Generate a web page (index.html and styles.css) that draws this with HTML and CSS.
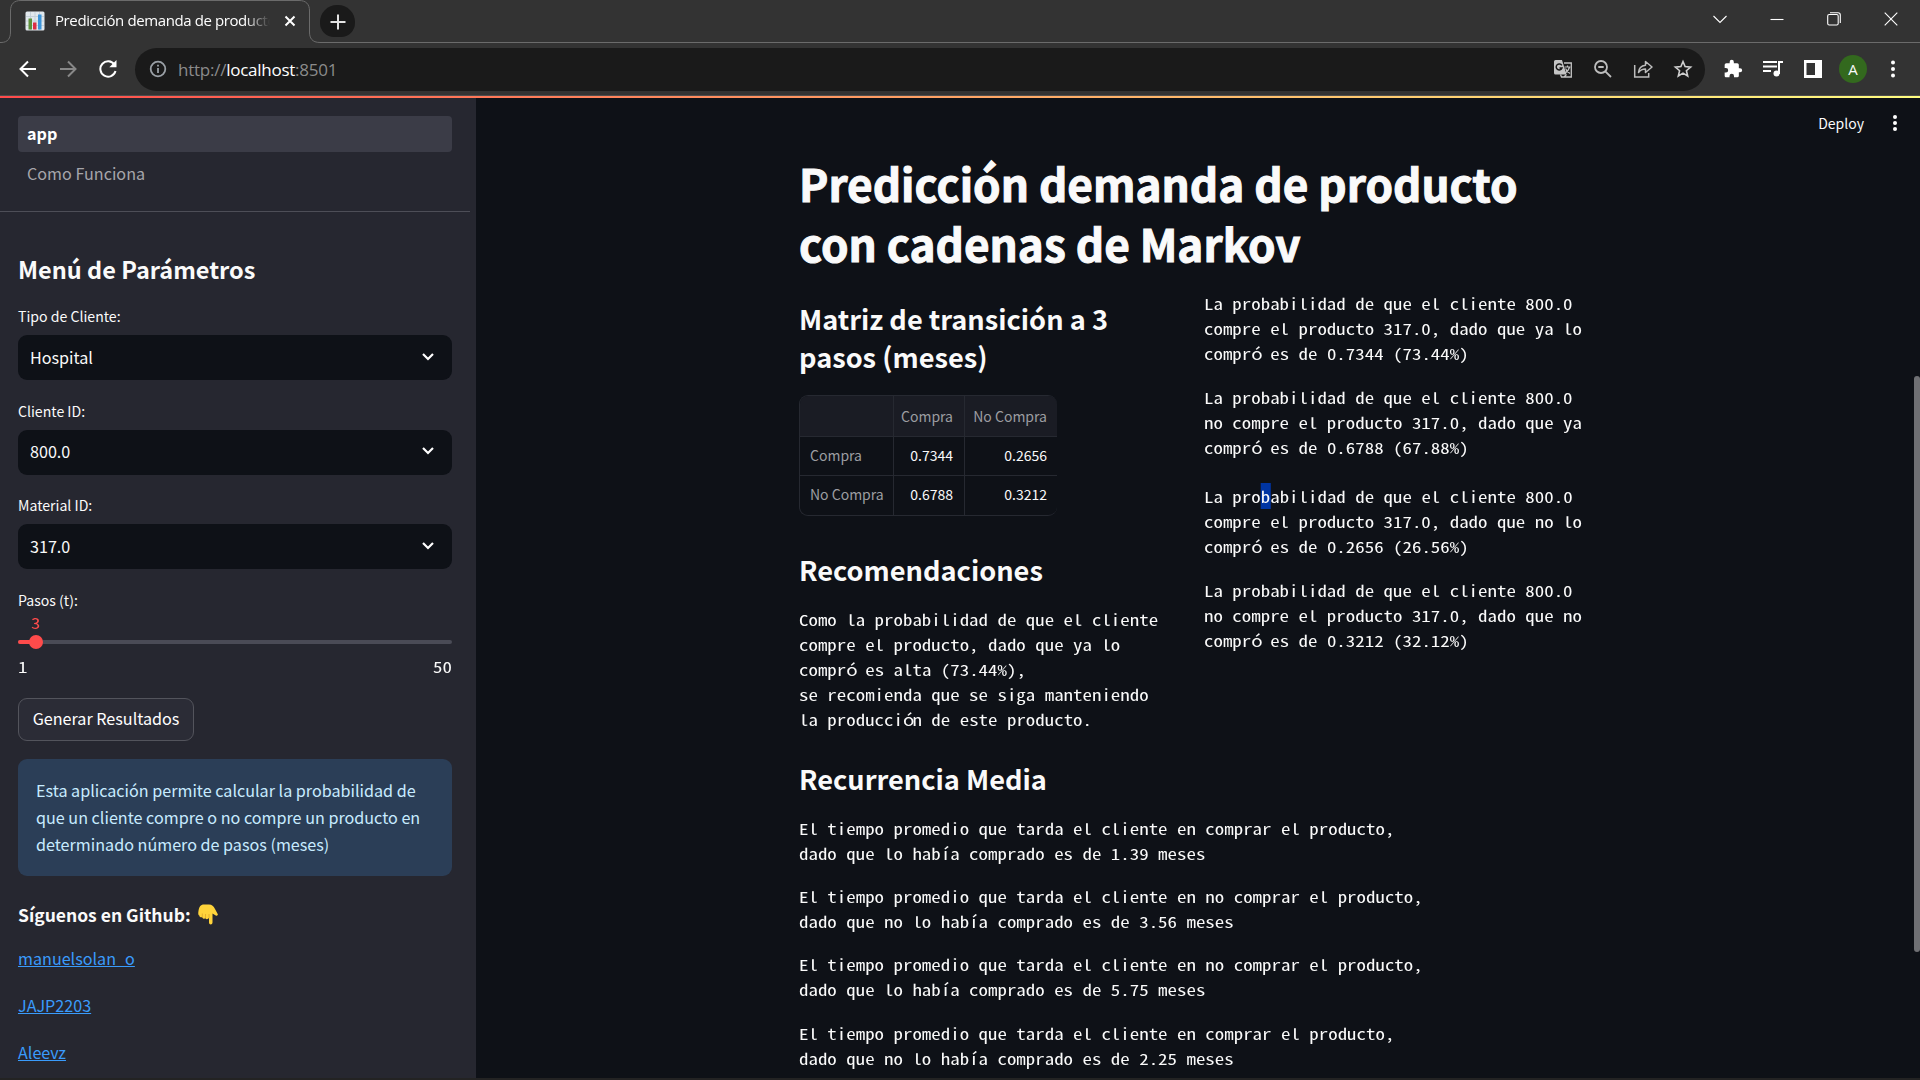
FILE: index.html
```html
<!DOCTYPE html>
<html lang="es">
<head>
<meta charset="utf-8">
<title>Predicción demanda de producto</title>
<link rel="stylesheet" href="styles.css">
</head>
<body>
<div class="window">
  <header class="tabstrip">
    <svg class="tab-outline" width="1920" height="43" viewBox="0 0 1920 43" fill="none" stroke="#6b6b6b"><path d="M0 42.5H1C8 42.5 10.500 38 10.500 32V11C10.500 4 14 .5 21 .5H299C306 .5 309.500 4 309.500 11V32C309.500 38 312 42.500 320 42.500H1920"/></svg>
    <svg class="favicon" width="20" height="20" viewBox="0 0 20 20"><rect x=".5" y=".5" width="19" height="19" rx="1.500" fill="#e1e8ed"/><path d="M5.500 1v18M10 1v18M14.500 1v18M1 5.500h18M1 10h18M1 14.500h18" stroke="#c5d1da"/><path fill="#5c913b" d="M3.500 7.500h3.500v11h-3.500z"/><path fill="#dd2e44" d="M8 11.500h3.500v7h-3.500z"/><path fill="#3b94d9" d="M13 3.500h3.500v15h-3.500z"/></svg>
    <span class="tab-title">Predicción demanda de producto</span>
    <svg class="tab-close" width="12" height="12" viewBox="0 0 12 12" stroke="#fff" stroke-width="2"><path d="M1.500 1.500l9 9M10.500 1.500l-9 9"/></svg>
    <span class="new-tab"><svg width="16" height="16" viewBox="0 0 16 16" stroke="#e4e4e4" stroke-width="2"><path d="M8 .5v15M.5 8h15"/></svg></span>
    <div class="win-buttons">
      <svg width="14" height="14" viewBox="0 0 14 14"><path d="M.5 4l6.500 6.500L13.500 4"/></svg>
      <svg width="14" height="14" viewBox="0 0 14 14"><path d="M.5 7.500h13"/></svg>
      <svg width="14" height="14" viewBox="0 0 14 14"><rect x=".7" y="2.500" width="10.500" height="10.500" rx="1.500"/><path d="M3 .7h8a2.300 2.300 0 0 1 2.300 2.300v8"/></svg>
      <svg width="14" height="14" viewBox="0 0 14 14"><path d="M.7.7l12.600 12.600M13.300.7L.7 13.300"/></svg>
    </div>
  </header>
  <div class="toolbar">
    <svg class="nav" width="18" height="18" viewBox="0 0 18 18" stroke="#fff"><path d="M17 9H2M9 1.500L1.500 9 9 16.500"/></svg>
    <svg class="nav" width="18" height="18" viewBox="0 0 18 18" stroke="#888"><path d="M1 9h15M9 1.500L16.500 9 9 16.500"/></svg>
    <svg class="nav" width="18" height="18" viewBox="0 0 18 18" stroke="#fff"><path d="M15.500 4.700A7.700 7.700 0 1 0 16.500 11"/><path d="M17.500 0v7.200h-7.200z" fill="#fff" stroke="none"/></svg>
    <div class="omnibox">
      <svg width="18" height="18" viewBox="0 0 18 18" fill="none" stroke="#9aa0a6" stroke-width="1.800"><circle cx="9" cy="9" r="7.300"/><path d="M9 8v5M9 4.800v1.800"/></svg>
      <span class="url">http://<b>localhost</b>:8501</span>
      <div class="omni-icons">
        <svg width="20" height="20" viewBox="0 0 20 20"><path d="M2.500 1h6.500l4.500 14.500H2.500A1.500 1.500 0 0 1 1 14V2.500A1.500 1.500 0 0 1 2.500 1z" fill="#c4c4c4"/><path d="M11 4h7.300v14H8.500l-1-2.500M13.500 15.500L11 18" fill="none" stroke="#c4c4c4" stroke-width="1.300"/><path d="M8.800 6.400A3 3 0 1 0 9 9H6.500" fill="none" stroke="#1a1a1a" stroke-width="1.500"/><path d="M11.500 8h6M14.500 6.500V8M16.500 8c-.7 3-2.500 5-4.500 6M12.500 9.500c1 2 2.500 4 4.500 5" fill="none" stroke="#c4c4c4" stroke-width="1.200"/></svg>
        <svg width="20" height="20" viewBox="0 0 20 20" fill="none" stroke="#bdbdbd" stroke-width="1.800"><circle cx="8" cy="8" r="6"/><path d="M12.300 12.300l5.700 5.700M5.300 8h5.400"/></svg>
        <svg width="20" height="20" viewBox="0 0 20 20" fill="none" stroke="#bdbdbd" stroke-width="1.500"><path d="M1.700 6v12h14V14"/><path d="M5.500 13.500c.3-4.500 3-6.800 7-7.300V2.500L19 8l-6.500 5.500V10c-3 0-5.200 1-7 3.500z" stroke-linejoin="round"/></svg>
        <svg width="20" height="20" viewBox="0 0 20 20" fill="none" stroke="#cfcfcf" stroke-width="1.600"><path d="M10 2.500l2.100 5.100 5.500.5-4.200 3.600 1.300 5.300L10 14.100 5.300 17l1.300-5.300-4.200-3.600 5.500-.5z"/></svg>
      </div>
    </div>
    <div class="ext-icons">
      <svg width="20" height="20" viewBox="0 0 24 24" fill="#fff"><path d="M20.500 11H19V7a2 2 0 0 0-2-2h-4V3.500a2.500 2.500 0 0 0-5 0V5H4a2 2 0 0 0-2 2v3.800h1.500a2.700 2.700 0 0 1 0 5.400H2V20c0 1.100.9 2 2 2h3.800v-1.500a2.700 2.700 0 0 1 5.400 0V22H17a2 2 0 0 0 2-2v-4h1.500a2.500 2.500 0 0 0 0-5z"/></svg>
      <svg width="20" height="20" viewBox="0 0 20 20" fill="none" stroke="#fff" stroke-width="2"><path d="M0 3h14M0 7.500h14M0 12h8M16 15V3H20"/><circle cx="13.500" cy="14.500" r="3" fill="#fff" stroke="none"/></svg>
      <svg width="20" height="20" viewBox="0 0 20 20"><path d="M1 1h18v18H1zM3.500 4v12H12V4z" fill="#fff" fill-rule="evenodd"/></svg>
      <span class="avatar">A</span>
      <svg width="20" height="20" viewBox="0 0 20 20" fill="#fff"><circle cx="10" cy="3.500" r="2"/><circle cx="10" cy="10" r="2"/><circle cx="10" cy="16.500" r="2"/></svg>
    </div>
  </div>
  <div class="decoration"></div>
  <div class="app">
    <aside class="sidebar">
      <nav class="pages"><a class="page current">app</a><a class="page">Como Funciona</a></nav>
      <h2 class="menu-title">Menú de Parámetros</h2>
      <div class="field"><label>Tipo de Cliente:</label><div class="select">Hospital<svg width="12" height="8" viewBox="0 0 12 8"><path d="M1 1l5 5 5-5"/></svg></div></div>
      <div class="field"><label>Cliente ID:</label><div class="select">800.0<svg width="12" height="8" viewBox="0 0 12 8"><path d="M1 1l5 5 5-5"/></svg></div></div>
      <div class="field"><label>Material ID:</label><div class="select">317.0<svg width="12" height="8" viewBox="0 0 12 8"><path d="M1 1l5 5 5-5"/></svg></div></div>
      <div class="slider">
        <label>Pasos (t):</label>
        <div class="value"><span>3</span></div>
        <div class="track"><i class="fill"></i><i class="thumb"></i></div>
        <div class="ticks"><span>1</span><span class="max">50</span></div>
      </div>
      <button class="generate">Generar Resultados</button>
      <div class="info">Esta aplicación permite calcular la probabilidad de<br>que un cliente compre o no compre un producto en<br>determinado número de pasos (meses)</div>
      <div class="follow">Síguenos en Github:<svg width="20" height="21" viewBox="0 0 20 21"><path d="M6 .5h5c3 0 4.500 1.500 6 4.500l2.700 5c.6 1.300-.8 2.400-2 1.500L14.500 9.500V18.500c0 2.500-3.500 2.500-3.500 0V14c-1 1.500-3 1.500-3.500.2-1.200.9-3 .5-3.200-1C2.700 13.700 1.300 13 1.300 11.500 0 11 .2 9 .4 7.500 1 3 2.500.5 6 .5z" fill="#ffd43b"/><path d="M4.300 13.200V9.500M7.500 14.200V10M11 14v-4" stroke="#e0a82a" stroke-width=".8" fill="none"/></svg></div>
      <div class="links"><a>manuelsolan_o</a><a>JAJP2203</a><a>Aleevz</a></div>
    </aside>
    <main class="main">
      <div class="deploy"><span>Deploy</span><svg width="6" height="16" viewBox="0 0 6 16" fill="#fff"><circle cx="3" cy="2" r="2"/><circle cx="3" cy="8" r="2"/><circle cx="3" cy="14" r="2"/></svg></div>
      <div class="content">
        <h1>Predicción demanda de producto<br>con cadenas de Markov</h1>
        <div class="columns">
          <section class="left">
            <h3>Matriz de transición a 3<br>pasos (meses)</h3>
            <div class="matrix">
              <span class="head"></span><span class="head">Compra</span><span class="head">No Compra</span>
              <span class="row-name">Compra</span><span>0.7344</span><span>0.2656</span>
              <span class="row-name">No Compra</span><span>0.6788</span><span>0.3212</span>
            </div>
            <h3 class="rec">Recomendaciones</h3>
            <pre class="rec-text">Como la probabilidad de que el cliente
compre el producto, dado que ya lo
compr<span class="wide">ó</span> es alta (73.44%),
se recomienda que se siga manteniendo
la producci<span class="wide">ó</span>n de este producto.</pre>
          </section>
          <section class="right">
            <pre>La probabilidad de que el cliente 800.0
compre el producto 317.0, dado que ya lo
compr<span class="wide">ó</span> es de 0.7344 (73.44%)</pre>
            <pre>La probabilidad de que el cliente 800.0
no compre el producto 317.0, dado que ya
compr<span class="wide">ó</span> es de 0.6788 (67.88%)</pre>
            <pre class="gap">La pro<span class="selected">b</span>abilidad de que el cliente 800.0
compre el producto 317.0, dado que no lo
compr<span class="wide">ó</span> es de 0.2656 (26.56%)</pre>
            <pre>La probabilidad de que el cliente 800.0
no compre el producto 317.0, dado que no
compr<span class="wide">ó</span> es de 0.3212 (32.12%)</pre>
          </section>
        </div>
        <h3 class="media">Recurrencia Media</h3>
        <div class="times">
          <pre>El tiempo promedio que tarda el cliente en comprar el producto,
dado que lo hab<span class="narrow">í</span>a comprado es de 1.39 meses</pre>
          <pre>El tiempo promedio que tarda el cliente en no comprar el producto,
dado que no lo hab<span class="narrow">í</span>a comprado es de 3.56 meses</pre>
          <pre>El tiempo promedio que tarda el cliente en no comprar el producto,
dado que lo hab<span class="narrow">í</span>a comprado es de 5.75 meses</pre>
          <pre>El tiempo promedio que tarda el cliente en comprar el producto,
dado que no lo hab<span class="narrow">í</span>a comprado es de 2.25 meses</pre>
        </div>
      </div>
      <div class="scroll-thumb"></div>
    </main>
  </div>
  <div class="bottom-edge"></div>
</div>
</body>
</html>
```
FILE: styles.css
```css
* { box-sizing: border-box; }
body { margin: 0; background: #0e1117; color: #fafafa; font-family: "Noto Sans CJK JP", "Noto Sans", sans-serif; font-size: 16.15px; }
h1, h2, h3, pre { margin: 0; white-space: pre; }
svg { flex: none; display: block; }
.window { width: 1920px; height: 1080px; display: flex; flex-direction: column; overflow: hidden; }

.tabstrip { position: relative; height: 43px; flex: none; background: #333; display: flex; align-items: center; padding: 0 16px 2px 25px; font-family: "Open Sans", sans-serif; }
.tab-outline { position: absolute; left: 0; top: 0; }
.tab-title { margin: -2px 0 0 10px; width: 215px; overflow: hidden; white-space: nowrap; font-size: 15px; letter-spacing: -.4px; color: #fff; -webkit-mask-image: linear-gradient(90deg, #000 190px, transparent 215px); mask-image: linear-gradient(90deg, #000 190px, transparent 215px); }
.tab-close { margin-left: 14px; }
.new-tab { margin-left: 24px; width: 35px; height: 32px; padding-top: 2px; border-radius: 17px 17px 14px 14px; background: #1a1a1a; display: flex; align-items: center; justify-content: center; }
.win-buttons { margin-left: auto; display: flex; gap: 43px; padding-right: 6px; margin-top: -4px; }
.win-buttons svg { fill: none; stroke: #fff; stroke-width: 1.1; }

.toolbar { height: 53px; flex: none; background: #333; display: flex; align-items: center; padding: 0 17px 0 19px; border-bottom: 1px solid #4c4c4c; font-family: "Open Sans", sans-serif; }
.nav { fill: none; stroke-width: 2; margin-right: 22px; }
.omnibox { width: 1570px; height: 43px; border-radius: 22px; background: #1a1a1a; display: flex; align-items: center; padding: 0 12px 0 14px; margin-left: -4px; }
.url { margin-left: 11px; font-size: 17px; letter-spacing: -.25px; color: #8b8b8b; }
.url b { font-weight: 400; color: #fff; }
.omni-icons { margin-left: auto; display: flex; gap: 20px; }
.ext-icons { flex: 1; display: flex; align-items: center; gap: 20px; padding-left: 18px; }
.avatar { width: 28px; height: 28px; margin: 0 -4px; border-radius: 50%; background: #33691e; font-size: 15px; text-align: center; line-height: 28px; }
.decoration { height: 2px; flex: none; background: linear-gradient(90deg, #ff4b4b, #fffd80); }

.app { flex: 1; min-height: 0; display: flex; }
.bottom-edge { height: 2px; flex: none; background: #232323; }
.sidebar { width: 476px; flex: none; background: #262730; padding-right: 24px; overflow: hidden; }
.sidebar > * { margin-left: 18px; }
.sidebar > .pages { margin-left: 0; height: 114px; padding: 18px 18px 0; width: 470px; border-bottom: 1px solid #4d4e57; }
.page { display: block; height: 36px; line-height: 34px; padding-left: 9px; border-radius: 4px; margin-bottom: 4px; color: #a5a5aa; }
.page.current { background: #3b3c47; color: #fff; font-weight: 700; }
.menu-title { margin-top: 37px; height: 40px; line-height: 40px; font-size: 23.500px; font-weight: 700; }
label { display: block; font-size: 14.100px; white-space: nowrap; }
.field { height: 94.500px; }
.menu-title + .field { margin-top: 13px; }
.field label { height: 33px; line-height: 28px; }
.select { height: 45px; border-radius: 9px; background: #0e1117; display: flex; align-items: center; justify-content: space-between; padding: 0 18px 2px 12px; }
.select svg { fill: none; stroke: #fff; stroke-width: 2.2; }
.slider { height: 110.500px; margin-top: 2px; }
.slider label { height: 23px; line-height: 24px; }
.value { width: 36px; height: 24px; line-height: 24px; padding-left: 13px; color: #ff4b4b; }
.value, .ticks, pre { font-family: "Noto Sans Mono CJK JP", "Liberation Mono", monospace; font-size: 15px; }
.value span, .ticks span { display: block; transform: scaleX(1.26); transform-origin: 0 0; }
.ticks .max { transform-origin: 100% 0; }
.track { position: relative; height: 4px; border-radius: 2px; background: #4a4b56; margin-top: 5px; }
.fill { position: absolute; left: 0; top: 0; width: 18px; height: 4px; border-radius: 2px; background: #ff4b4b; }
.thumb { position: absolute; left: 11px; top: -5px; width: 14px; height: 14px; border-radius: 50%; background: #ff4b4b; }
.ticks { display: flex; justify-content: space-between; margin-top: 11px; line-height: 24px; }
.generate { display: block; width: 176px; height: 43px; border: 1px solid #53545c; border-radius: 9px; background: #2b2c36; color: #fff; font: inherit; padding: 0 0 3px; }
.info { margin-top: 18px; height: 117px; padding: 18px; border-radius: 9px; background: #2b3e57; color: #c7ebff; line-height: 27px; white-space: nowrap; }
.follow { margin-top: 25px; height: 27px; line-height: 27px; font-size: 17.500px; font-weight: 700; display: flex; align-items: center; gap: 7px; }
.links { display: flex; flex-direction: column; align-items: flex-start; gap: 20px; margin-top: 17px; }
.links a { color: #3a9bfb; text-decoration: underline; line-height: 27px; }

.main { position: relative; flex: 1; min-width: 0; overflow: hidden; }
.deploy { height: 50px; display: flex; justify-content: flex-end; align-items: center; gap: 28px; padding-right: 22px; font-size: 14px; }
.deploy span { margin-top: -1px; }
.content { margin-left: 323px; padding-top: 5px; }
h1 { font-size: 44.100px; line-height: 60px; font-weight: 700; -webkit-text-stroke: 1px; }
h3 { font-size: 27.200px; line-height: 38px; font-weight: 700; }
pre { line-height: 25px; transform: scaleX(1.26); transform-origin: 0 0; }
.wide { letter-spacing: -.106em; }
.narrow { margin: 0 .112em; }
.columns { display: flex; height: 486px; }
.left { width: 405px; padding-top: 26px; }
.matrix { margin-top: 20px; width: 258px; height: 121px; display: grid; grid-template-columns: 94px 71px 93px; grid-template-rows: 41px 39px 41px; border: solid #262931; border-width: 1px 0 1px 1px; border-radius: 9px; overflow: hidden; font-size: 14px; }
.matrix span { display: flex; align-items: center; justify-content: flex-end; padding: 0 11px 2px 0; border-right: 1px solid #262931; border-bottom: 1px solid #262931; }
.matrix span:nth-child(3n) { border-right: 0; }
.matrix span:nth-child(n+7) { padding-bottom: 5px; border-bottom: 0; }
.matrix .head { background: #1a1c24; color: #9c9da1; padding-bottom: 0; }
.matrix .row-name { justify-content: flex-start; padding-right: 0; padding-left: 10px; color: #9c9da1; }
.rec { margin-top: 34px; }
.rec-text { margin-top: 19px; }
.right { padding-top: 18px; display: flex; flex-direction: column; gap: 19px; }
.right .gap { margin-top: 5px; }
.selected { padding: 3px 0 2px; background: #0035a3; }
.times { margin-top: 18.500px; display: flex; flex-direction: column; gap: 18.400px; }
.scroll-thumb { position: absolute; right: 0; top: 278px; width: 6px; height: 576px; border-radius: 3px; background: #6f7074; }
```
